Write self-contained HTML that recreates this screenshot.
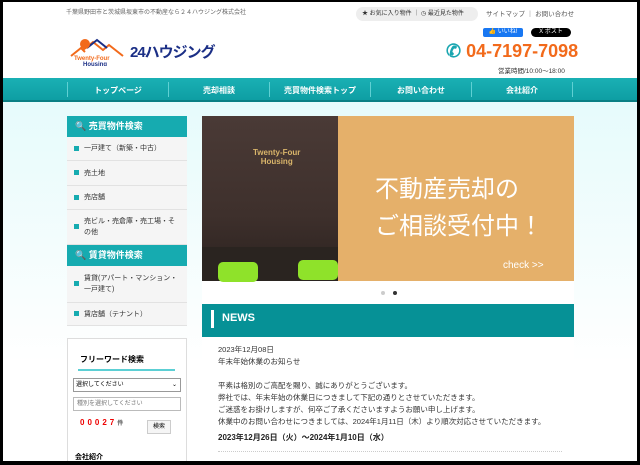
<!DOCTYPE html><html><head><meta charset="utf-8"><style>
*{margin:0;padding:0;box-sizing:border-box}
body{width:640px;height:465px;overflow:hidden;background:#000;font-family:"Liberation Sans","Noto Sans CJK JP",sans-serif;}
#f{position:absolute;left:3px;top:2px;width:634px;height:459px;background:#fff;overflow:hidden}
.a{position:absolute}
.nav{left:0;top:76px;width:634px;height:24px;background:linear-gradient(#1ab0b4,#0e9ea3);border-bottom:2px solid #0a7f84}
.nav span{position:absolute;top:7px;font-size:8px;color:#fff;font-weight:bold;text-align:center;width:100px}
.nav i{position:absolute;top:4px;width:1px;height:15px;background:#5fd0d3}
.bg{left:0;top:100px;width:634px;height:359px;background:linear-gradient(#e6fbfc,#f4fdfd 150px,#fff 260px)}
.sh{background:#16abb0;color:#fff;font-size:9px;font-weight:bold;height:21px;line-height:21px;padding-left:8px;width:120px}
.it{background:#f5f5f5;border-bottom:1px solid #e2e2e2;font-size:7px;color:#333;padding:0 6px 0 17px;position:relative;width:120px}
.it:before{content:"";position:absolute;left:7px;width:5px;height:5px;background:#16abb0;top:50%;margin-top:-3px}
.n{font-size:7.5px;color:#333;line-height:12px}
</style></head><body><div id="f">
<div class="a" style="left:63px;top:5px;font-size:6px;color:#666">千葉県野田市と茨城県坂東市の不動産なら２４ハウジング株式会社</div>
<div class="a" style="left:353px;top:5px;width:122px;height:14px;background:#eee;border-radius:7px;font-size:6px;color:#333;line-height:14px;padding-left:6px">★ お気に入り物件 ｜ ◷ 最近見た物件</div>
<div class="a" style="left:483px;top:6px;font-size:6.5px;color:#555">サイトマップ ｜ お問い合わせ</div>
<div class="a" style="left:480px;top:26px;width:40px;height:9px;background:#1877f2;color:#fff;font-size:6px;line-height:9px;border-radius:2px;text-align:center">👍 いいね!</div>
<div class="a" style="left:528px;top:26px;width:40px;height:9px;background:#000;color:#fff;font-size:6px;line-height:9px;border-radius:5px;text-align:center">X ポスト</div>
<svg class="a" style="left:66px;top:34px" width="60" height="30"><path d="M2 20 L12 12 L16 16 M14 14 L24 6 L34 14 L40 9 L54 20" stroke="#f26a1b" stroke-width="2" fill="none"/><path d="M18 12 L28 4 L38 12" stroke="#1b2f86" stroke-width="2" fill="none"/><circle cx="16" cy="8" r="5" fill="#f26a1b"/><text x="5" y="24" font-size="6" fill="#f26a1b" font-weight="bold" font-family="Liberation Sans">Twenty-Four</text><text x="14" y="30" font-size="6" fill="#1b2f86" font-weight="bold" font-family="Liberation Sans">Housing</text></svg>
<div class="a" style="left:127px;top:39px;font-size:15px;color:#1b2f86;font-weight:bold;letter-spacing:-1px">24ハウジング</div>
<div class="a" style="left:443px;top:39px;font-size:18px;color:#f26a1b;font-weight:bold"><span style="color:#1aa6b0">✆</span> 04-7197-7098</div>
<div class="a" style="left:495px;top:63px;font-size:6.5px;color:#333">営業時間/10:00～18:00</div>
<div class="a nav"><i style="left:64px"></i><span style="left:65px">トップページ</span><i style="left:165px"></i><span style="left:166px">売却相談</span><i style="left:266px"></i><span style="left:267px">売買物件検索トップ</span><i style="left:367px"></i><span style="left:368px">お問い合わせ</span><i style="left:468px"></i><span style="left:469px">会社紹介</span><i style="left:569px"></i></div>
<div class="a bg"></div>
<div class="a" style="left:64px;top:114px">
<div class="sh">🔍 売買物件検索</div>
<div class="it" style="height:24px;line-height:24px">一戸建て（新築・中古）</div>
<div class="it" style="height:25px;line-height:25px">売土地</div>
<div class="it" style="height:24px;line-height:24px">売店舗</div>
<div class="it" style="height:35px;padding-top:6px;line-height:11px">売ビル・売倉庫・売工場・その他</div>
<div class="sh">🔍 賃貸物件検索</div>
<div class="it" style="height:37px;padding-top:7px;line-height:11px">賃貸(アパート・マンション・一戸建て)</div>
<div class="it" style="height:23px;line-height:23px">賃店舗（テナント）</div>
</div>
<div class="a" style="left:64px;top:336px;width:120px;height:130px;background:#fff;border:1px solid #ddd">
<div style="position:absolute;left:12px;top:15px;font-size:8px;font-weight:bold">フリーワード検索</div>
<div style="position:absolute;left:10px;top:30px;width:97px;height:2px;background:#5ccfd4"></div>
<div style="position:absolute;left:5px;top:39px;width:108px;height:14px;border:1px solid #999;font-size:6px;line-height:12px;padding-left:2px">選択してください<span style="float:right;padding-right:3px">⌄</span></div>
<div style="position:absolute;left:5px;top:58px;width:108px;height:14px;border:1px solid #bbb;font-size:6px;line-height:12px;padding-left:3px;color:#777">種別を選択してください</div>
<div style="position:absolute;left:12px;top:79px;font-size:8px;color:#e00;font-weight:bold;letter-spacing:3px">00027<span style="font-size:6px;color:#555;letter-spacing:0">件</span></div>
<div style="position:absolute;left:79px;top:81px;width:24px;height:14px;border:1px solid #ccc;background:#f5f5f5;font-size:6px;text-align:center;line-height:12px">検索</div>
<div style="position:absolute;left:7px;top:113px;font-size:7px;font-weight:bold">会社紹介</div>
</div>
<div class="a" style="left:199px;top:114px;width:372px;height:345px;background:#fff"></div>
<div class="a" style="left:199px;top:114px;width:136px;height:165px;background:linear-gradient(#4a3a36,#3e302c 60%,#2a211e)"></div>
<div class="a" style="left:250px;top:146px;font-size:8px;color:#d9b56a;font-weight:bold;text-align:center;line-height:9px">Twenty-Four<br>Housing</div>
<div class="a" style="left:199px;top:245px;width:136px;height:34px;background:#2a2420"></div>
<div class="a" style="left:215px;top:260px;width:40px;height:20px;background:#8fe22a;border-radius:5px"></div>
<div class="a" style="left:295px;top:258px;width:40px;height:20px;background:#8fe22a;border-radius:5px"></div>
<div class="a" style="left:335px;top:114px;width:236px;height:165px;background:#e5b06a"></div>
<div class="a" style="left:372px;top:169px;font-size:24px;color:#fff;line-height:37px;white-space:nowrap">不動産売却の<br>ご相談受付中！</div>
<div class="a" style="left:500px;top:258px;font-size:10px;color:#fff">check &gt;&gt;</div>
<div class="a" style="left:378px;top:289px;width:4px;height:4px;border-radius:2px;background:#ccc"></div>
<div class="a" style="left:390px;top:289px;width:4px;height:4px;border-radius:2px;background:#333"></div>
<div class="a" style="left:199px;top:302px;width:372px;height:33px;background:#069196"></div>
<div class="a" style="left:208px;top:308px;width:3px;height:18px;background:#fff"></div>
<div class="a" style="left:219px;top:310px;font-size:11px;color:#fff;font-weight:bold">NEWS</div>
<div class="a n" style="left:215px;top:342px;white-space:nowrap">2023年12月08日<br>年末年始休業のお知らせ<br><br>平素は格別のご高配を賜り、誠にありがとうございます。<br>弊社では、年末年始の休業日につきまして下記の通りとさせていただきます。<br>ご迷惑をお掛けしますが、何卒ご了承くださいますようお願い申し上げます。<br>休業中のお問い合わせにつきましては、2024年1月11日（木）より順次対応させていただきます。</div>
<div class="a" style="left:215px;top:430px;font-size:8px;font-weight:bold;color:#222">2023年12月26日（火）～2024年1月10日（水）</div>
<div class="a" style="left:215px;top:449px;width:344px;border-top:1px dotted #ccc"></div>
</div></body></html>
